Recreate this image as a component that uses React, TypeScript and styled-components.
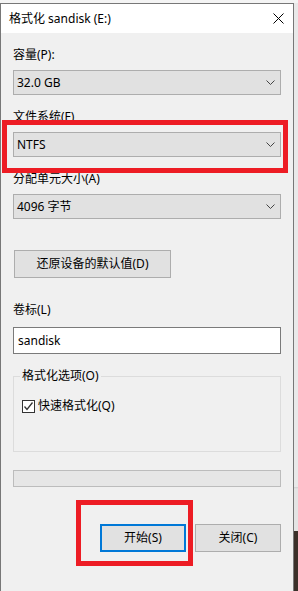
import styled, { createGlobalStyle } from 'styled-components';

const GlobalStyle = createGlobalStyle`
  html, body {
    margin: 0;
    padding: 0;
    background: #ececec;
  }
  body {
    font-family: "Noto Sans", "Noto Sans CJK SC", sans-serif;
    font-size: 12px;
    color: #000;
  }
`;

const ChevronIcon = () => (
  <svg width="9" height="5" viewBox="0 0 9 5">
    <path d="M0.5 0.5 L4.5 4.5 L8.5 0.5" fill="none" stroke="#444" strokeWidth="1" />
  </svg>
);

const CloseIcon = () => (
  <svg width="11" height="11" viewBox="0 0 11 11">
    <path d="M0.5 0.5 L10.5 10.5 M10.5 0.5 L0.5 10.5" stroke="#000" strokeWidth="1" />
  </svg>
);

const CheckIcon = () => (
  <svg width="11" height="11" viewBox="0 0 11 11">
    <path d="M1.5 5.5 L4 8.5 L9.5 1.5" fill="none" stroke="#333" strokeWidth="1.3" />
  </svg>
);

interface IFieldProps {
  label: string;
  value: string;
}

const ComboField: React.FC<IFieldProps> = ({ label, value }) => (
  <Field>
    <Label>{label}</Label>
    <ComboBox>
      <span>{value}</span>
      <ChevronIcon />
    </ComboBox>
  </Field>
);

const App = () => {
  return (
    <>
      <GlobalStyle />
      <Screen>
        <TopStrip />
        <Row>
          <Window>
            <TitleBar>
              <span>格式化 sandisk (E:)</span>
              <CloseIcon />
            </TitleBar>
            <Body>
              <ComboField label="容量(P):" value="32.0 GB" />
              <ComboField label="文件系统(F)" value="NTFS" />
              <ComboField label="分配单元大小(A)" value="4096 字节" />
              <RestoreButton>还原设备的默认值(D)</RestoreButton>
              <VolumeLabel>卷标(L)</VolumeLabel>
              <TextBox>sandisk</TextBox>
              <Group>
                <legend>格式化选项(O)</legend>
                <CheckRow>
                  <CheckBox>
                    <CheckIcon />
                  </CheckBox>
                  <span>快速格式化(Q)</span>
                </CheckRow>
              </Group>
              <Progress />
              <Actions>
                <DialogButton primary>开始(S)</DialogButton>
                <DialogButton>关闭(C)</DialogButton>
              </Actions>
            </Body>
            <Highlight top={116} left={2} width={286} height={53} />
            <Highlight top={496} left={76} width={117} height={66} />
          </Window>
          <OutsideStrip />
        </Row>
      </Screen>
    </>
  );
};

const Screen = styled.div`
  width: 298px;
  height: 591px;
  display: flex;
  flex-direction: column;
  overflow: hidden;
`;

const TopStrip = styled.div`
  height: 3px;
  background: #f4f4f4;
`;

const Row = styled.div`
  flex: 1;
  display: flex;
`;

const Window = styled.div`
  position: relative;
  width: 294px;
  box-sizing: border-box;
  border: 1px solid #777;
  border-bottom: none;
  background: #f0f0f0;
  display: flex;
  flex-direction: column;
`;

const OutsideStrip = styled.div`
  flex: 1;
  background: linear-gradient(
    to bottom,
    #e9e9e9 0,
    #e9e9e9 484px,
    #cfcfcf 484px,
    #e4e4e4 486px,
    #e4e4e4 528px,
    #3b3029 528px
  );
`;

const TitleBar = styled.div`
  height: 29px;
  background: #fff;
  display: flex;
  align-items: center;
  justify-content: space-between;
  padding: 0 9px 0 8px;
  font-size: 12px;

  span {
    line-height: 16px;
  }
`;

const Body = styled.div`
  flex: 1;
  padding: 14px 12px 0 12px;
  display: flex;
  flex-direction: column;
`;

const Field = styled.div`
  display: flex;
  flex-direction: column;
  gap: 7px;

  & + & {
    margin-top: 14px;
  }
`;

const Label = styled.div`
  line-height: 16px;
  height: 16px;
`;

const VolumeLabel = styled(Label)`
  margin-top: 24px;
  margin-bottom: 9px;
`;

const ComboBox = styled.div`
  height: 25px;
  box-sizing: border-box;
  border: 1px solid #adadad;
  background: #e1e1e1;
  display: flex;
  align-items: center;
  justify-content: space-between;
  padding: 0 5px 0 3px;
  line-height: 16px;

  svg {
    display: block;
  }
`;

const RestoreButton = styled.div`
  margin-top: 31px;
  margin-left: 1px;
  width: 157px;
  height: 28px;
  box-sizing: border-box;
  border: 1px solid #adadad;
  background: #e1e1e1;
  display: flex;
  align-items: center;
  justify-content: center;
  line-height: 16px;
`;

const TextBox = styled.div`
  height: 27px;
  box-sizing: border-box;
  border: 1px solid #7a7a7a;
  background: #fff;
  display: flex;
  align-items: center;
  padding: 0 4px;
  line-height: 16px;
`;

const Group = styled.fieldset`
  margin: 14px 0 0 0;
  padding: 0 8px 37px 8px;
  border: 1px solid #dcdcdc;
  min-width: 0;

  legend {
    margin-left: -2px;
    padding: 0 2px;
    line-height: 16px;
  }
`;

const CheckRow = styled.div`
  margin-top: 14px;
  display: flex;
  align-items: center;
  gap: 3px;
  height: 16px;
  line-height: 16px;
`;

const CheckBox = styled.div`
  width: 13px;
  height: 13px;
  box-sizing: border-box;
  border: 1px solid #333;
  background: #fff;
  display: flex;
  align-items: center;
  justify-content: center;

  svg {
    display: block;
  }
`;

const Progress = styled.div`
  margin-top: 18px;
  height: 17px;
  box-sizing: border-box;
  border: 1px solid #bcbcbc;
  background: #e6e6e6;
`;

const Actions = styled.div`
  margin-top: 37px;
  display: flex;
  justify-content: flex-end;
  gap: 9px;
`;

const DialogButton = styled.div<{ primary?: boolean }>`
  width: 86px;
  height: 28px;
  box-sizing: border-box;
  border: ${(props) => (props.primary ? '2px solid #0078d7' : '1px solid #adadad')};
  background: #e1e1e1;
  display: flex;
  align-items: center;
  justify-content: center;
  line-height: 16px;
`;

const Highlight = styled.div<{ top: number; left: number; width: number; height: number }>`
  position: absolute;
  top: ${(props) => props.top}px;
  left: ${(props) => props.left - 1}px;
  width: ${(props) => props.width}px;
  height: ${(props) => props.height}px;
  box-sizing: border-box;
  border: 5px solid #ed1c24;
  pointer-events: none;
`;

export default App;
